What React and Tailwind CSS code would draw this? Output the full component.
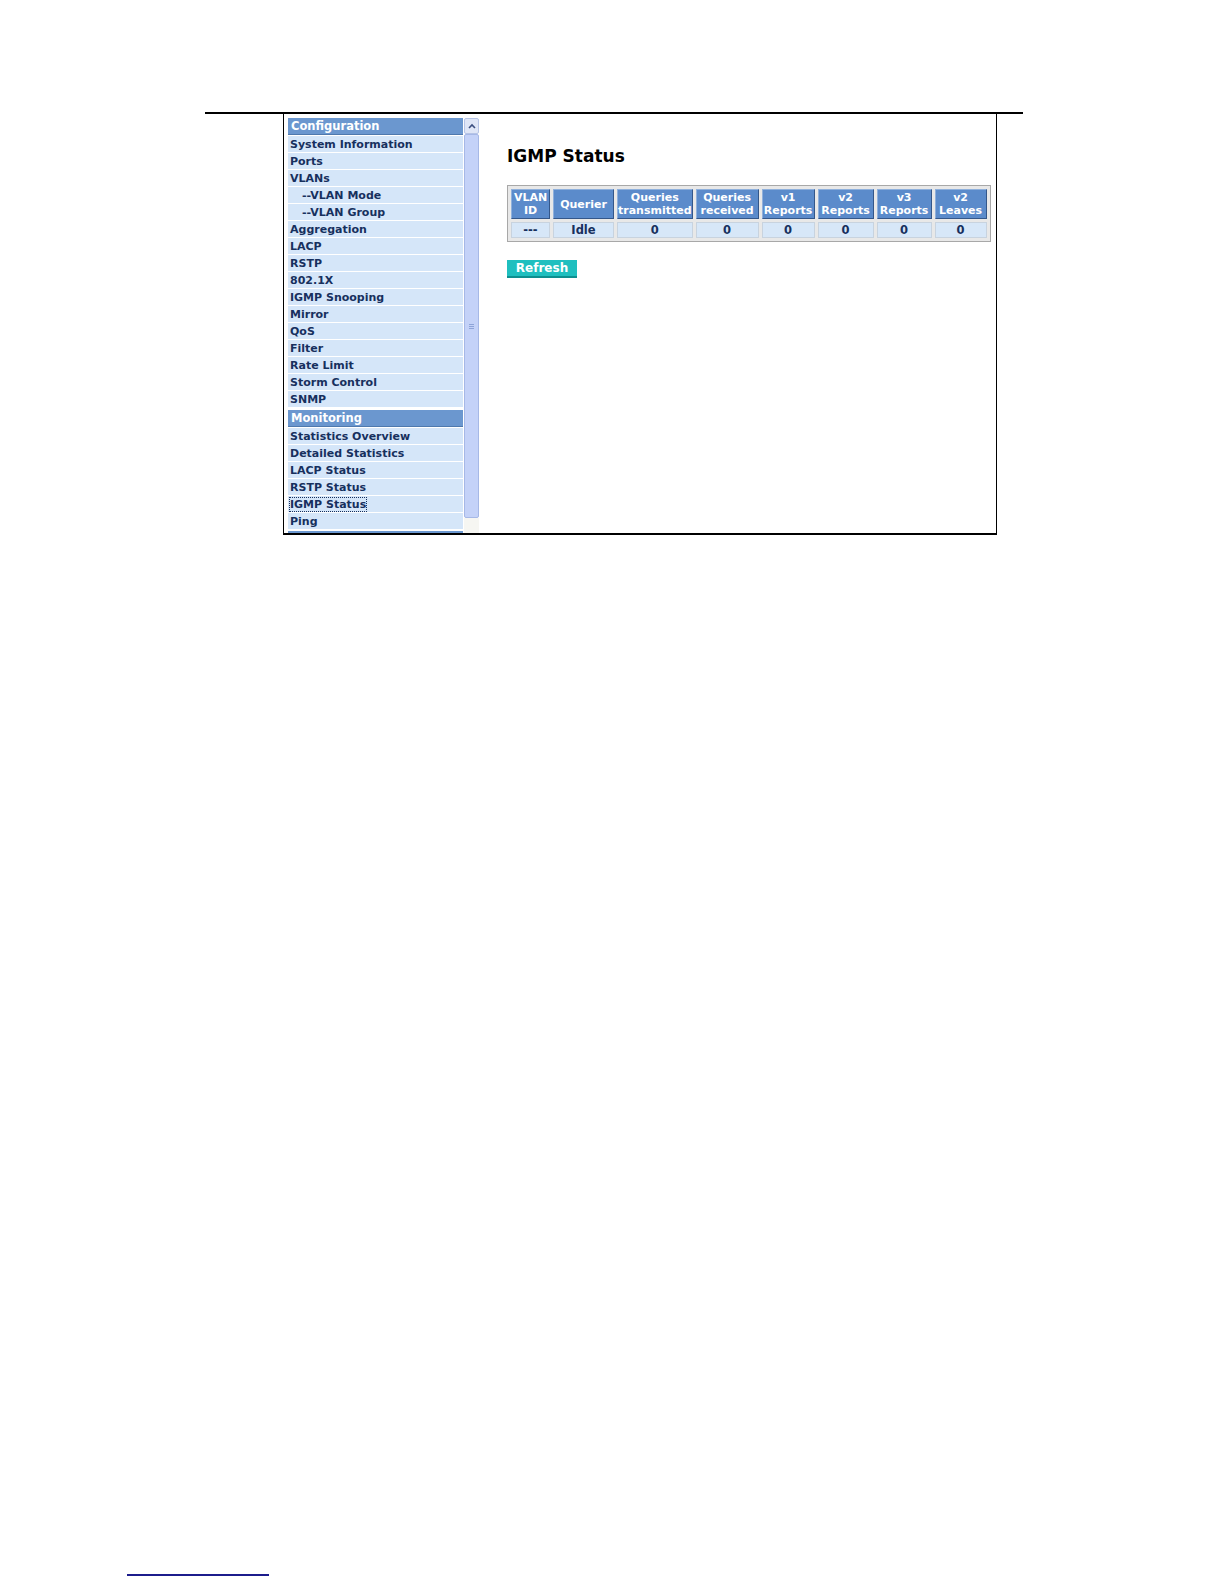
const menuTop = [
  { label: "System Information" },
  { label: "Ports" },
  { label: "VLANs" },
  { label: "--VLAN Mode", indent: true },
  { label: "--VLAN Group", indent: true },
  { label: "Aggregation" },
  { label: "LACP" },
  { label: "RSTP" },
  { label: "802.1X" },
  { label: "IGMP Snooping" },
  { label: "Mirror" },
  { label: "QoS" },
  { label: "Filter" },
  { label: "Rate Limit" },
  { label: "Storm Control" },
  { label: "SNMP" },
];

const menuMonitor = [
  { label: "Statistics Overview" },
  { label: "Detailed Statistics" },
  { label: "LACP Status" },
  { label: "RSTP Status" },
  { label: "IGMP Status", active: true },
  { label: "Ping" },
];

const columns = [
  { top: "VLAN", bottom: "ID", w: "w-[39px]", value: "---" },
  { top: "Querier", w: "w-[61px]", value: "Idle" },
  { top: "Queries", bottom: "transmitted", w: "w-[75px]", value: "0" },
  { top: "Queries", bottom: "received", w: "w-[63px]", value: "0" },
  { top: "v1", bottom: "Reports", w: "w-[53px]", value: "0" },
  { top: "v2", bottom: "Reports", w: "w-[56px]", value: "0" },
  { top: "v3", bottom: "Reports", w: "w-[55px]", value: "0" },
  { top: "v2", bottom: "Leaves", w: "w-[52px]", value: "0" },
];

function SectionHeader({ children }) {
  return (
    <div className="h-[17px] mb-[1px] bg-[#6b97cf] border-b border-[#4f79ad] pl-[3px] text-[11.5px] leading-[16px] font-bold text-white">
      {children}
    </div>
  );
}

function MenuRow({ item }) {
  return (
    <div
      className={`h-[16px] mb-[1px] bg-[#d5e6f9] text-[11px] leading-[17px] font-bold text-[#17305e] ${
        item.indent ? "pl-[14px]" : "pl-[2px]"
      }`}
    >
      <span className={item.active ? "outline-1 outline-dotted outline-[#17305e]" : ""}>
        {item.label}
      </span>
    </div>
  );
}

function Scrollbar() {
  return (
    <div className="w-[15px] ml-[1px] flex flex-col">
      <div className="h-[16px] bg-[#dfe6f7] border border-[#b6c4e6] rounded-[2px] flex items-center justify-center">
        <svg width="8" height="6" viewBox="0 0 8 6">
          <path d="M1 5 L4 2 L7 5" fill="none" stroke="#3c4f80" strokeWidth="1.6" />
        </svg>
      </div>
      <div className="h-[384px] bg-[#c4d2f8] border border-[#a6b8e6] rounded-[2px] flex items-center justify-center">
        <div className="flex flex-col gap-[1px]">
          <div className="w-[5px] h-px bg-[#8ea4d8]" />
          <div className="w-[5px] h-px bg-[#8ea4d8]" />
          <div className="w-[5px] h-px bg-[#8ea4d8]" />
        </div>
      </div>
      <div className="flex-1 bg-[#f6f6f2]" />
    </div>
  );
}

export default function App() {
  return (
    <div className="w-[1224px] h-[1584px] bg-white relative font-['DejaVu_Sans','Verdana',sans-serif]">
      <div className="h-[112px]" />
      <div className="ml-[205px] w-[818px] h-[2px] bg-black" />
      <div className="ml-[283px] w-[714px] h-[421px] border-l border-r border-b-2 border-black flex overflow-hidden">
        <div className="flex pl-[4px] pt-[4px]">
          <div className="w-[175px]">
            <SectionHeader>Configuration</SectionHeader>
            {menuTop.map((item) => (
              <MenuRow key={item.label} item={item} />
            ))}
            <div className="h-[2px]" />
            <SectionHeader>Monitoring</SectionHeader>
            {menuMonitor.map((item) => (
              <MenuRow key={item.label} item={item} />
            ))}
            <div className="h-[16px] mt-[2px] bg-[#6b97cf]" />
          </div>
          <Scrollbar />
        </div>

        <div className="pl-[28px] pt-[32px]">
          <h1 className="text-[17px] leading-[20px] font-bold text-black">IGMP Status</h1>

          <table className="mt-[19px] border-separate border-spacing-[3px] border border-[#a8a8a8] bg-[#e8e8e8]">
            <thead>
              <tr>
                {columns.map((c, i) => (
                  <th
                    key={i}
                    className={`${c.w} h-[30px] p-0 bg-[#5b8bcb] border border-t-[#8fb0dc] border-l-[#8fb0dc] border-r-[#34578a] border-b-[#34578a] text-white text-[11px] leading-[13px] font-bold text-center`}
                  >
                    {c.top}
                    {c.bottom && <br />}
                    {c.bottom}
                  </th>
                ))}
              </tr>
            </thead>
            <tbody>
              <tr>
                {columns.map((c, i) => (
                  <td
                    key={i}
                    className="h-[16px] p-0 bg-[#d7e7f8] border border-[#c8d3df] text-[#17305e] text-[11.5px] leading-[14px] font-bold text-center"
                  >
                    {c.value}
                  </td>
                ))}
              </tr>
            </tbody>
          </table>

          <button
            type="button"
            className="mt-[18px] w-[70px] h-[18px] bg-[#1fbfbf] border-b-2 border-[#0e8f8f] text-white text-[12px] leading-[16px] font-bold"
          >
            Refresh
          </button>
        </div>
      </div>

      <div className="absolute left-[127px] top-[1574px] w-[142px] h-[2px] bg-[#1c1c8c]" />
    </div>
  );
}
